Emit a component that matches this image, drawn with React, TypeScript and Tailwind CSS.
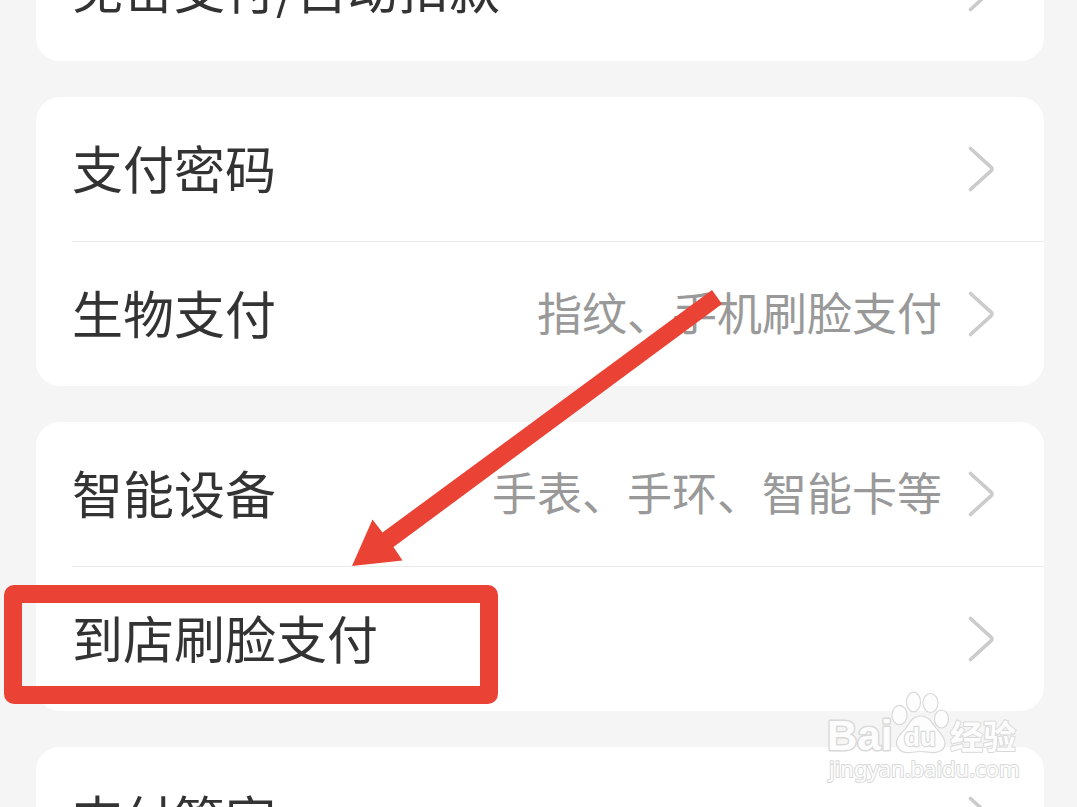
import type { ReactNode } from "react";

function Chevron() {
  return (
    <svg
      className="h-[50px] w-[32px] shrink-0"
      viewBox="0 0 32 50"
      fill="none"
      stroke="#cbcbcb"
      strokeWidth="3.6"
      strokeLinecap="round"
      strokeLinejoin="round"
      aria-hidden="true"
    >
      <path d="M4.5 4.5 L25 23.2 Q27 25 25 26.8 L4.5 45.5" />
    </svg>
  );
}

function Row({ label, value, children }: { label: string; value?: string; children?: ReactNode }) {
  return (
    <li className="relative">
      <a href="#" className="flex h-36 items-center justify-between pr-[46px] pl-9">
        <span className="pb-1 text-[51px] leading-[72px] whitespace-nowrap text-[#333333]">{label}</span>
        <span className="flex items-center gap-6">
          {value && (
            <span className="pb-1 text-[45px] leading-[64px] whitespace-nowrap text-[#999999]">{value}</span>
          )}
          <Chevron />
        </span>
      </a>
      {children}
    </li>
  );
}

function Card({ children }: { children: ReactNode }) {
  return <ul className="shrink-0 rounded-3xl bg-white">{children}</ul>;
}

function Divider() {
  return <li role="separator" className="ml-9 h-px bg-[#ebebeb]" />;
}

function Arrow() {
  return (
    <svg
      className="pointer-events-none absolute top-[288px] left-[350px] h-[280px] w-[376px]"
      viewBox="350 288 376 280"
      aria-hidden="true"
    >
      <path d="M712 290 L722 304 L393.500 547 L402.500 560.500 L352 566 L372.500 519.500 L382.500 532.500 Z" fill="#ea4335" />
    </svg>
  );
}

function Watermark() {
  return (
    <svg
      className="pointer-events-none absolute right-[53px] bottom-[21px] h-[100px] w-[204px]"
      viewBox="820 686 204 100"
      role="img"
      aria-label="Baidu 经验"
    >
      <g fill="#fdfdfd" stroke="#d9d9d9" strokeWidth="1.2" strokeLinejoin="round">
        <text
          x="827"
          y="750"
          fontFamily="'Liberation Sans', sans-serif"
          fontWeight="700"
          fontSize="42"
          strokeWidth="3"
          paintOrder="stroke"
        >
          Bai
        </text>
        <ellipse cx="899.5" cy="715" rx="7.500" ry="9.700" />
        <ellipse cx="913.5" cy="702" rx="7" ry="9.800" />
        <ellipse cx="930.5" cy="703" rx="7.500" ry="9.500" />
        <ellipse cx="941.5" cy="719" rx="7" ry="9" />
        <path d="M920.500 716 C928 716 932 722 936 728 C940 733 945 737 945 743 C945 750 939 753 932 752.500 C927 752 924 751.500 920.500 751.500 C916 751.500 911 753 906 752.500 C900 752 896 747 896.500 742 C897 736 902 733 906 728 C910 722 913 716 920.500 716 Z" />
        <text
          x="904"
          y="746"
          fontFamily="'Liberation Sans', sans-serif"
          fontWeight="700"
          fontSize="26"
          strokeWidth="2.4"
          paintOrder="stroke"
        >
          du
        </text>
        <text
          x="950"
          y="749"
          fontFamily="'Noto Sans CJK SC', sans-serif"
          fontWeight="700"
          fontSize="33"
          strokeWidth="2"
          paintOrder="stroke"
        >
          经验
        </text>
        <text x="829" y="777" fontFamily="'Noto Sans', sans-serif" fontSize="22" strokeWidth="2" paintOrder="stroke">
          jingyan.baidu.com
        </text>
      </g>
    </svg>
  );
}

export default function App() {
  return (
    <main className="relative flex h-screen flex-col gap-9 overflow-hidden bg-[#f5f5f5] pr-[33px] pl-9 font-['Noto_Sans_CJK_SC',sans-serif]">
      <ul className="flex h-[61px] shrink-0 flex-col justify-end overflow-hidden rounded-b-3xl bg-white">
        <Row label="免密支付/自动扣款" />
      </ul>
      <Card>
        <Row label="支付密码" />
        <Divider />
        <Row label="生物支付" value="指纹、手机刷脸支付" />
      </Card>
      <Card>
        <Row label="智能设备" value="手表、手环、智能卡等" />
        <Divider />
        <Row label="到店刷脸支付">
          <div className="pointer-events-none absolute top-[18px] -left-8 h-[119px] w-[494px] rounded-[10px] border-[18px] border-[#ea4335]" />
        </Row>
      </Card>
      <Card>
        <Row label="支付管家" />
      </Card>
      <Arrow />
      <Watermark />
    </main>
  );
}
